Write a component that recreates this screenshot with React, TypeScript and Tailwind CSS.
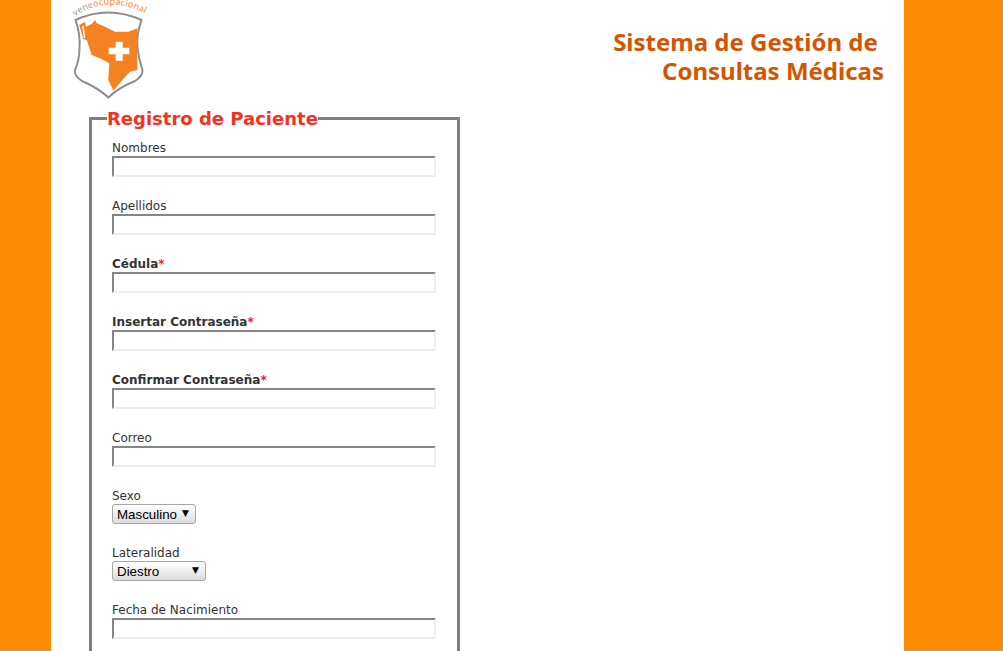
import { ReactNode } from 'react'

function Logo() {
  return (
    <svg width="80" height="100" viewBox="70 0 80 100" className="block">
      <defs>
        <path id="arc" d="M75 16 Q108 -6 146 14" fill="none" />
      </defs>
      {/* shield */}
      <path
        d="M75.5 20 Q108 5 141.500 20 Q136 36 137.500 48 Q139 60 142.500 70 Q143 76 135 81 Q118 88 108.500 97.500 Q98 88 82 81 Q74 76 75 70 Q79.500 60 79.500 48 Q80.500 34 75.500 20 Z"
        fill="#fff"
        stroke="#8e8e8e"
        strokeWidth="2"
      />
      {/* map */}
      <path
        d="M79.300 25 L85 21.700 L86 26.700 L91.700 24 L95 20 L96.700 23.300 L105 26.700 L115 31.700 L128.300 31.700 L137.300 28.300 L137.300 70 L130 71.700 L126.700 75 L113.300 90.700 L108.300 80 L109.300 63.300 L100 58.300 L91.700 55 L86.700 40 L83.300 39.300 Z"
        fill="#f58220"
      />
      <path d="M83 26 L84.500 38" stroke="#fff" strokeWidth="1.500" fill="none" />
      {/* cross */}
      <path d="M115.700 41.700 H122.700 V47.700 H129.300 V54.300 H122.700 V60.700 H115.700 V54.300 H108.700 V47.700 H115.700 Z" fill="#fff" />
      <text fontSize="9" fontFamily="'Open Sans', sans-serif" letterSpacing="0.200">
        <textPath href="#arc">
          <tspan fill="#999">vene</tspan>
          <tspan fill="#f58220">ocupacional</tspan>
        </textPath>
      </text>
    </svg>
  )
}

function Field({ label, required, children }: { label: string; required?: boolean; children?: ReactNode }) {
  return (
    <div className="mb-[21px]">
      <label className={`block h-4 text-[12px] leading-4 text-[#333] ${required ? 'font-bold' : ''}`}>
        {label}
        {required && <span className="text-[#e8213a]">*</span>}
      </label>
      {children ?? (
        <input
          type="text"
          className="block h-[21px] w-[324px] border-2 border-t-[#858585] border-l-[#858585] border-r-[#eeeeee] border-b-[#eeeeee] bg-white"
        />
      )}
    </div>
  )
}

function Select({ value, width }: { value: string; width: string }) {
  return (
    <div className={`relative h-5 ${width}`}>
      <select className="block h-5 w-full appearance-none rounded-[3px] border border-[#a6a6a6] bg-gradient-to-b from-white to-[#dcdcdc] pl-1 font-['Liberation_Sans',sans-serif] text-[13.33px] text-black">
        <option>{value}</option>
      </select>
      <span className="pointer-events-none absolute top-[5px] right-[7px] text-[9px] leading-[9px] text-black">▼</span>
    </div>
  )
}

export default function App() {
  return (
    <div className="h-screen overflow-hidden bg-[#ff8c00] font-['DejaVu_Sans',sans-serif]">
      <div className="ml-[51px] min-h-full w-[853px] bg-white">
        <header className="flex h-[108px] items-start justify-between pr-5 pl-[19px]">
          <Logo />
          <h1 className="mt-[27px] text-right font-['Noto_Sans',sans-serif] text-[24px] leading-[29px] font-bold text-[#d45500]">
            Sistema de Gestión de&nbsp;
            <br />
            Consultas Médicas
          </h1>
        </header>
        <fieldset className="ml-[38px] w-[371px] border-[3px] border-[#808080] px-5 pt-[11px]">
          <legend className="ml-[-5px] text-[18px] leading-[21px] font-bold text-[#f5321e]">Registro de Paciente</legend>
          <Field label="Nombres" />
          <Field label="Apellidos" />
          <Field label="Cédula" required />
          <Field label="Insertar Contraseña" required />
          <Field label="Confirmar Contraseña" required />
          <Field label="Correo" />
          <Field label="Sexo">
            <Select value="Masculino" width="w-[84px]" />
          </Field>
          <Field label="Lateralidad">
            <Select value="Diestro" width="w-[94px]" />
          </Field>
          <Field label="Fecha de Nacimiento" />
        </fieldset>
      </div>
    </div>
  )
}
